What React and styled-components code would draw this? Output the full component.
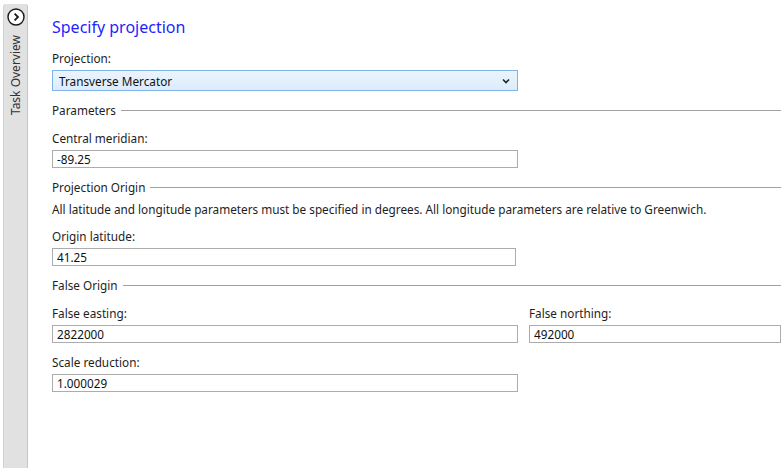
import React from "react";
import styled, { createGlobalStyle } from "styled-components";

const GlobalStyle = createGlobalStyle`
  html, body {
    margin: 0;
    padding: 0;
    background: #ffffff;
  }
  body {
    font-family: "Noto Sans", "Open Sans", sans-serif;
    font-size: 11.75px;
    color: #1e1e1e;
  }
`;

const Field = ({ label, value, width = 466 }) => (
  <FieldBox>
    <Label>{label}</Label>
    <TextInput style={{ width }} defaultValue={value} />
  </FieldBox>
);

const Group = ({ title }) => (
  <GroupHeader>
    <span>{title}</span>
    <GroupLine />
  </GroupHeader>
);

export default () => (
  <>
    <GlobalStyle />
    <Page>
      <SideStrip>
        <SideTab>
          <svg width="18" height="18" viewBox="0 0 18 18">
            <circle cx="9" cy="9" r="8" fill="#fff" stroke="#1a1a1a" strokeWidth="1.4" />
            <path d="M7.6 5.6 L11 9 L7.6 12.4" fill="none" stroke="#1a1a1a" strokeWidth="1.8" />
          </svg>
          <SideLabel>Task Overview</SideLabel>
        </SideTab>
      </SideStrip>
      <Content>
        <Title>Specify projection</Title>
        <FieldBox>
          <Label>Projection:</Label>
          <Select>
            <span>Transverse Mercator</span>
            <svg width="8" height="6" viewBox="0 0 8 6">
              <path d="M1 1.5 L4 4.5 L7 1.5" fill="none" stroke="#222" strokeWidth="1.6" />
            </svg>
          </Select>
        </FieldBox>
        <Group title="Parameters" />
        <Field label="Central meridian:" value="-89.25" />
        <Group title="Projection Origin" />
        <Description>
          All latitude and longitude parameters must be specified in degrees. All longitude parameters are relative to Greenwich.
        </Description>
        <Field label="Origin latitude:" value="41.25" width={464} />
        <Group title="False Origin" $top={1} />
        <Row>
          <Field label="False easting:" value="2822000" />
          <Wide>
            <Field label="False northing:" value="492000" width="100%" />
          </Wide>
        </Row>
        <Field label="Scale reduction:" value="1.000029" />
      </Content>
    </Page>
  </>
);

const Page = styled.div`
  display: flex;
  height: 468px;
  overflow: hidden;
`;
const SideStrip = styled.div`
  width: 28px;
  padding: 4px 0 0 3px;
  box-sizing: border-box;
  display: flex;
  flex-shrink: 0;
`;
const SideTab = styled.div`
  flex: 1;
  display: flex;
  flex-direction: column;
  align-items: center;
  background: #e1e1e1;
  border-left: 1px solid #d2d2d2;
  border-right: 1px solid #c6c6c6;
  border-top-left-radius: 3px;
  border-top-right-radius: 3px;
  padding-top: 4px;
`;
const SideLabel = styled.div`
  writing-mode: vertical-rl;
  transform: rotate(180deg);
  margin-top: 9px;
  color: #333;
  font-size: 12px;
  line-height: 14px;
`;
const Content = styled.div`
  flex: 1;
  padding: 15px 0 0 24px;
  display: flex;
  flex-direction: column;
  min-width: 0;
`;
const Title = styled.h1`
  margin: 0 0 11px;
  font-size: 16px;
  font-weight: 400;
  line-height: 24px;
  color: #1f1fff;
`;
const FieldBox = styled.div`
  display: flex;
  flex-direction: column;
  margin-bottom: 11px;
`;
const Label = styled.div`
  line-height: 16px;
  margin-bottom: 4px;
`;
const TextInput = styled.input`
  box-sizing: border-box;
  height: 18px;
  border: 1px solid #acacac;
  padding: 0 4px;
  font: inherit;
  color: #111;
  outline: none;
`;
const Select = styled.div`
  box-sizing: border-box;
  width: 466px;
  height: 21px;
  display: flex;
  align-items: center;
  justify-content: space-between;
  padding: 0 7px 0 6px;
  border: 1px solid #7eb4ea;
  background: linear-gradient(#ecf4fc, #dcecfc);
  color: #111;
`;
const GroupHeader = styled.div`
  display: flex;
  align-items: center;
  line-height: 16px;
  margin-top: ${(p) => p.$top || 0}px;
  margin-bottom: 12px;
`;
const GroupLine = styled.div`
  flex: 1;
  height: 1px;
  background: #a0a0a0;
  margin-left: 5px;
`;
const Description = styled.div`
  line-height: 16px;
  margin: -6px 0 11px;
  white-space: nowrap;
`;
const Row = styled.div`
  display: flex;
  gap: 11px;
`;
const Wide = styled.div`
  flex: 1;
  display: flex;
  flex-direction: column;
`;
